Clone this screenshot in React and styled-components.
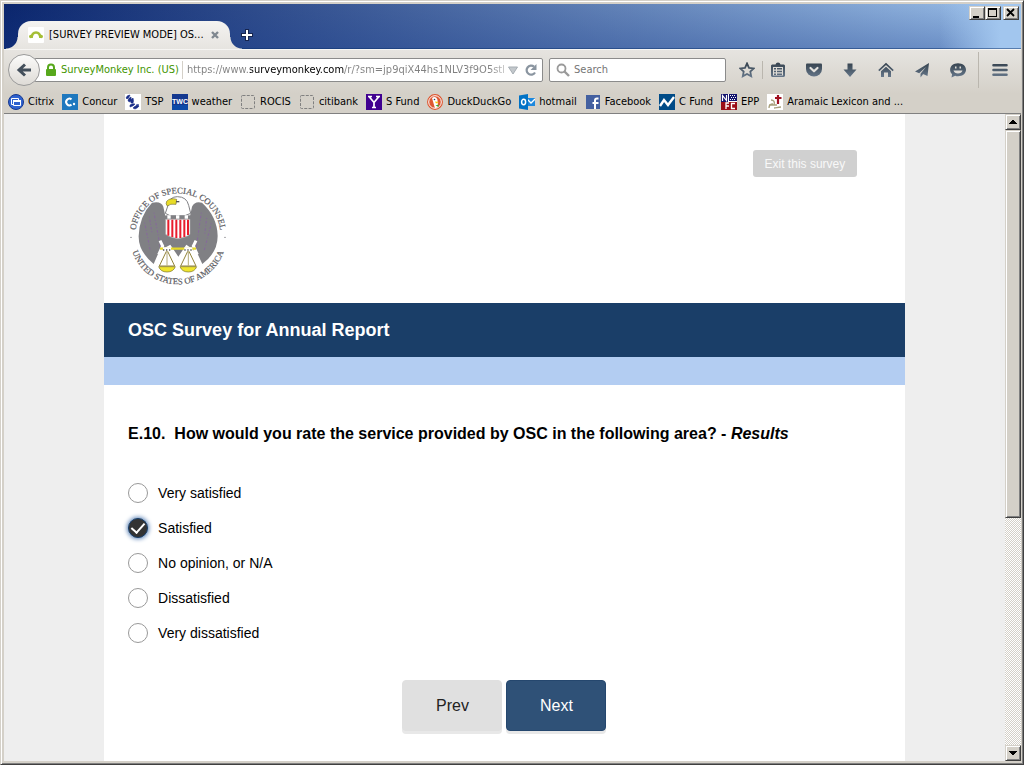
import React, { useState } from "react";
import styled, { createGlobalStyle, css } from "styled-components";

const GlobalStyle = createGlobalStyle`
  * {
    box-sizing: border-box;
  }
  body {
    margin: 0;
    overflow: hidden;
  }
  button, input {
    font: inherit;
    padding: 0;
    border: 0;
    background: none;
  }
`;

const face = "#d4d0c8";

const raised = css`
  background-color: ${face};
  border: 1px solid;
  border-color: #d4d0c8 #404040 #404040 #d4d0c8;
  box-shadow: inset 1px 1px #fff, inset -1px -1px #808080;
`;

/* ---------- window ---------- */

const Window = styled.div`
  ${raised}
  height: 100vh;
  padding: 3px 2px 3px 3px;
  display: flex;
  flex-direction: column;
  font-family: "DejaVu Sans Condensed", "DejaVu Sans", sans-serif;
  font-size: 11px;
  line-height: 14px;
  color: #000;
`;

const TitleBar = styled.div`
  height: 45px;
  flex: none;
  display: flex;
  align-items: flex-end;
  padding-left: 14px;
  background: linear-gradient(to right, transparent 92%, #a2c6ee 98%),
    linear-gradient(rgba(24, 60, 140, 0.08), rgba(24, 60, 140, 0.36)),
    linear-gradient(to right, #0a246a, #a6caf0);
  box-shadow: inset 0 -1px rgba(10, 50, 110, 0.5);
`;

const Tab = styled.div`
  position: relative;
  width: 212px;
  height: 28px;
  padding: 0 10px;
  display: flex;
  align-items: center;
  gap: 5px;
  border-radius: 13px 13px 0 0;
  background: linear-gradient(#f4f3f1, #e6e4e0);
  &::before,
  &::after {
    content: "";
    position: absolute;
    bottom: 0;
    width: 12px;
    height: 12px;
  }
  &::before {
    right: 100%;
    background: radial-gradient(circle at 0 0, transparent 11px, #e6e4e0 12px);
  }
  &::after {
    left: 100%;
    background: radial-gradient(circle at 100% 0, transparent 11px, #e6e4e0 12px);
  }
`;

const TabTitle = styled.span`
  flex: 1;
  white-space: nowrap;
`;

const PlainBtn = styled.button`
  display: flex;
  align-items: center;
  justify-content: center;
`;

const NewTabBtn = styled(PlainBtn)`
  width: 34px;
  height: 28px;
`;

const WindowBtns = styled.div`
  align-self: flex-start;
  margin-left: auto;
  padding: 2px 2px 0 0;
  display: flex;
`;

const WindowBtn = styled.button`
  ${raised}
  width: 16px;
  height: 14px;
  display: flex;
  &:last-child {
    margin-left: 2px;
  }
`;

/* ---------- toolbars ---------- */

const Toolbars = styled.div`
  flex: none;
  background: linear-gradient(#e6e4e0, ${face} 44px);
  border-top: 1px solid #f6f5f3;
  border-bottom: 1px solid #808080;
`;

const NavBar = styled.div`
  height: 40px;
  padding-left: 4px;
  display: flex;
  align-items: center;
`;

const BackBtn = styled(PlainBtn)`
  position: relative;
  z-index: 1;
  flex: none;
  width: 32px;
  height: 32px;
  margin-right: -6px;
  border: 1px solid #9a9a9a;
  border-radius: 50%;
  background: linear-gradient(#fbfbfa, #dedbd6);
`;

const Field = styled.div`
  height: 24px;
  display: flex;
  align-items: center;
  background: #fff;
  border: 1px solid #8b8b8b;
  border-radius: 2px;
`;

const UrlField = styled(Field)`
  flex: 1;
  min-width: 0;
  padding: 0 2px 0 10px;
  margin-right: 6px;
`;

const Identity = styled.span`
  padding: 0 3px 0 4px;
  margin-right: 4px;
  line-height: 18px;
  color: #429500;
  border-right: 1px solid #d4d0c8;
  white-space: nowrap;
`;

const UrlInput = styled.input`
  flex: 1;
  min-width: 0;
  color: transparent;
  outline: none;
  background: linear-gradient(
    to right,
    #808080 63px,
    #000 63px,
    #000 157px,
    #808080 157px,
    #808080 calc(100% - 16px),
    #c0c0c0
  );
  background-clip: text;
  -webkit-background-clip: text;
`;

const UrlBtn = styled(PlainBtn)`
  width: 18px;
  height: 22px;
`;

const SearchField = styled(Field)`
  flex: none;
  width: 177px;
  padding-left: 6px;
  margin-right: 6px;
  gap: 4px;
`;

const SearchInput = styled.input`
  flex: 1;
  min-width: 0;
  outline: none;
  &::placeholder {
    color: #757575;
    opacity: 1;
  }
`;

const ToolBtn = styled(PlainBtn)`
  flex: none;
  width: ${(props) => props.$w || 36}px;
  height: 32px;
`;

const Separator = styled.span`
  flex: none;
  width: 1px;
  height: ${(props) => props.$h}px;
  margin: ${(props) => props.$margin || 0};
  background: #bab6ae;
`;

const Bookmarks = styled.nav`
  height: 23px;
  padding-left: 4px;
  display: flex;
  align-items: center;
  gap: 8px;
`;

const Bookmark = styled.a`
  flex: none;
  display: flex;
  align-items: center;
  gap: 4px;
  color: #000;
  text-decoration: none;
  white-space: nowrap;
`;

/* ---------- page ---------- */

const Viewport = styled.div`
  flex: 1;
  min-height: 0;
  display: flex;
`;

const Page = styled.div`
  flex: 1;
  overflow: hidden;
  background: #eee;
  font-family: "Liberation Sans", Arial, sans-serif;
`;

const Survey = styled.main`
  width: 80%;
  min-height: 100%;
  margin: 0 auto;
  background: #fff;
`;

const SurveyHeader = styled.header`
  display: flex;
  justify-content: space-between;
  align-items: flex-start;
  padding: 36px 48px 17px 24px;
`;

const Logo = styled.svg`
  width: 100px;
  height: 100px;
  margin-top: 36px;
  overflow: visible;
`;

const ExitBtn = styled.button`
  width: 104px;
  height: 27px;
  border-radius: 3px;
  background: #d0d0d0;
  color: #f8f8f8;
  font-size: 12px;
`;

const SurveyTitle = styled.h1`
  margin: 0;
  padding: 0 24px;
  font-size: 18px;
  line-height: 54px;
  color: #fff;
  background: #1a3e68;
`;

const Strip = styled.div`
  height: 28px;
  background: #b3cdf2;
`;

const Question = styled.fieldset`
  margin: 0;
  padding: 0 24px;
  border: 0;
`;

const QuestionTitle = styled.legend`
  padding: 39px 0 31px;
  font-size: 16px;
  line-height: 20px;
  font-weight: bold;
`;

const Option = styled.label`
  height: 35px;
  display: flex;
  align-items: center;
  gap: 10px;
  font-size: 14px;
`;

const Radio = styled.input`
  appearance: none;
  flex: none;
  width: 20px;
  height: 20px;
  margin: 0;
  border: 1px solid #999;
  border-radius: 50%;
  background: #fff;
  display: flex;
  justify-content: center;
  &:checked {
    border-color: #1a3e68;
    background: #333;
    box-shadow: 0 0 4px 1px #5f86b8;
  }
  &:checked::after {
    content: "";
    width: 6px;
    height: 11px;
    margin-top: 2px;
    border: solid #fff;
    border-width: 0 2px 2px 0;
    transform: translateY(-1px) rotate(42deg);
  }
`;

const Actions = styled.div`
  display: flex;
  justify-content: center;
  gap: 4px;
  padding: 30px 0;
`;

const ActionBtn = styled.button`
  width: 100px;
  height: 51px;
  border-radius: 4px;
  font-size: 16px;
  color: ${(props) => (props.$primary ? "#fff" : "#222")};
  background: ${(props) => (props.$primary ? "#2f5177" : "#e0e0e0")};
  border: 1px solid ${(props) => (props.$primary ? "#25476e" : "#e0e0e0")};
  box-shadow: 0 3px #e8e8e8;
`;

/* ---------- scrollbar ---------- */

const Scrollbar = styled.div`
  flex: none;
  width: 16px;
  display: flex;
  flex-direction: column;
  background: repeating-conic-gradient(#fff 0 25%, ${face} 0 50%) 0 0 / 2px 2px;
`;

const ScrollBtn = styled.button`
  ${raised}
  flex: none;
  height: 16px;
  display: flex;
  align-items: center;
  justify-content: center;
`;

const Thumb = styled.div`
  ${raised}
  flex: 63;
`;

const Track = styled.div`
  flex: 37;
`;

/* ---------- drawings ---------- */

const Svg = styled.svg.attrs((props) => ({
  width: props.$w || 16,
  height: props.$h || props.$w || 16,
  viewBox: `0 0 ${props.$w || 16} ${props.$h || props.$w || 16}`,
  "aria-hidden": true,
}))`
  flex: none;
`;

const ink = "url(#ink)";

const icons = {
  star: (
    <g>
      <linearGradient id="ink" gradientUnits="userSpaceOnUse" x1="0" y1="1" x2="0" y2="15">
        <stop offset="0" stopColor="#36434f" />
        <stop offset="1" stopColor="#66778a" />
      </linearGradient>
      <path d="M8 1.500l2 4.300 4.800.6-3.500 3.200.9 4.700L8 12l-4.200 2.300.9-4.700L1.200 6.400 6 5.800z" fill="none" stroke={ink} strokeWidth="1.800" />
    </g>
  ),
  list: (
    <g>
      <path d="M2 2.500h3.500Q6 .5 8 .5t2.500 2H14l1 1V14l-1 1H2l-1-1V3.500z" fill={ink} />
      <path d="M3 5h10v8.500H3z" fill="#dedbd6" />
      <path d="M4 6h2v1.500H4zM7 6h5v1.500H7zM4 8.700h2v1.500H4zM7 8.700h5v1.500H7zM4 11.400h2v1.500H4zM7 11.400h5v1.500H7z" fill={ink} />
    </g>
  ),
  pocket: (
    <g>
      <path d="M1 1.500h14q1 0 1 1V7a8 7.500 0 0 1-16 0V2.500q0-1 1-1z" fill={ink} />
      <path d="M4.500 6l3.500 3.300L11.500 6" fill="none" stroke="#e4e2de" strokeWidth="2.200" strokeLinecap="round" strokeLinejoin="round" />
    </g>
  ),
  down: <path d="M5.500 1.500h5v6h4L8 15 1.500 7.500h4z" fill={ink} />,
  home: (
    <g>
      <path d="M.8 8.700L8 2l7.200 6.700" fill="none" stroke={ink} strokeWidth="1.700" />
      <path d="M3 9.300l5-4.600 5 4.600V15h-3v-4.500H6V15H3z" fill={ink} />
    </g>
  ),
  plane: (
    <path d="M15 1L1 9.500l4.200 1.700L12 5 6.500 11.800V15.500l2-2.500zM15 1L9 12l4.500 2z" fill={ink} />
  ),
  smile: (
    <g>
      <path d="M8 1.300c4.600 0 8 2.800 8 6.500s-3.400 6.500-8 6.500c-1 0-2-.1-2.800-.5L1.500 15.500l.6-3.300C.8 11 .1 9.600.1 7.800.1 4.100 3.400 1.300 8 1.300z" fill={ink} />
      <path d="M3.500 8.500h9c-.4 2-2.200 3-4.500 3s-4.100-1-4.500-3zM5 4.500h1.500v2H5zM9.500 4.500H11v2H9.500z" fill="#e0ddd8" />
    </g>
  ),
  menu: (
    <path d="M1.500 2h13a1.300 1.300 0 0 1 0 2.600h-13a1.300 1.300 0 0 1 0-2.600zM1.500 6.700h13a1.300 1.300 0 0 1 0 2.600h-13a1.300 1.300 0 0 1 0-2.600zM1.500 11.400h13a1.300 1.300 0 0 1 0 2.600h-13a1.300 1.300 0 0 1 0-2.600z" fill={ink} />
  ),
};

const dashed = (
  <rect x="1.500" y="1.500" width="13" height="13" rx="1" fill="none" stroke="#808080" strokeDasharray="3 1.300" />
);

const bookmarks = [
  {
    label: "Citrix",
    icon: (
      <g>
        <circle cx="8" cy="8" r="7.500" fill="#2f62cf" stroke="#17398f" />
        <path d="M3.500 4.500h7v6h-7z" fill="#2f62cf" stroke="#fff" />
        <path d="M5.500 6.500h7v5h-7z" fill="#2f62cf" stroke="#fff" />
        <path d="M5 6h8v2H5z" fill="#fff" />
      </g>
    ),
  },
  {
    label: "Concur",
    icon: (
      <g>
        <path d="M0 0h16v16H0z" fill="#1f78be" />
        <path d="M9.500 5.400a3.300 3.300 0 1 0 0 5.200" fill="none" stroke="#fff" strokeWidth="2" />
        <circle cx="12" cy="10" r="1.200" fill="#fff" />
      </g>
    ),
  },
  {
    label: "TSP",
    icon: (
      <g>
        <path d="M0 0h16v16H0z" fill="#fff" />
        <path d="M1 4q1-3 4-3-1 3-3 4zM3 7q0-3 3-4 1 3-1 5zM6 9q-1-3 2-5 1 3 0 5zM5 11q3-2 5-1-1 2-5 3zM8 14q2-3 6-2-1 2-4 3zM11 11q2-1 3 0l-2 1z" fill="#1b2f8a" stroke="#1b2f8a" strokeWidth=".6" />
      </g>
    ),
  },
  {
    label: "weather",
    icon: (
      <g>
        <path d="M0 0h16v16H0z" fill="#14388f" />
        <path d="M0 11h16v5H0z" fill="#0d4aa8" />
        <text x="8" y="10" textAnchor="middle" fontSize="7" fontWeight="bold" fontFamily="Liberation Sans" fill="#fff">TWC</text>
      </g>
    ),
  },
  { label: "ROCIS", icon: dashed },
  { label: "citibank", icon: dashed },
  {
    label: "S Fund",
    icon: (
      <g>
        <path d="M0 0h16v16H0z" fill="#400090" />
        <path d="M3 2.500l5 6 5-6M8 8v6M2 2.500h4M10 2.500h4M6 13.500h4" fill="none" stroke="#fff" strokeWidth="1.700" />
      </g>
    ),
  },
  {
    label: "DuckDuckGo",
    icon: (
      <g>
        <circle cx="8" cy="8" r="7.200" fill="#de5833" stroke="#de5833" strokeWidth="1.500" />
        <circle cx="8" cy="8" r="6.300" fill="none" stroke="#fff" />
        <path d="M5 4c2-2 5-1 5.500 2l.5 7-3 1.200z" fill="#fff" />
        <path d="M8 7.500l4 .5-3 1.500z" fill="#fc0" />
        <circle cx="7.500" cy="5.500" r=".8" fill="#246" />
        <path d="M8.500 11.500l3-1v2.500z" fill="#3a3" />
      </g>
    ),
  },
  {
    label: "hotmail",
    icon: (
      <g>
        <path d="M8 4h8v8H8z" fill="#1e88dd" />
        <path d="M8 5l4 4 4-4" fill="none" stroke="#fff" strokeWidth="1.300" />
        <path d="M0 1.500L9 0v16l-9-1.500z" fill="#0072c6" />
        <ellipse cx="4.600" cy="8" rx="2" ry="2.700" fill="none" stroke="#fff" strokeWidth="1.500" />
      </g>
    ),
  },
  {
    label: "Facebook",
    icon: (
      <g>
        <path d="M1 1h14v14H1z" fill="#4460a0" />
        <path d="M10 15V9H7.500M10 9h3.500M10 9V6.500q0-2 2-2h1.500" fill="none" stroke="#fff" strokeWidth="2" />
      </g>
    ),
  },
  {
    label: "C Fund",
    icon: (
      <g>
        <path d="M0 0h16v16H0z" fill="#004b87" />
        <path d="M1 12l4-6 4 5 6-8" fill="none" stroke="#fff" strokeWidth="2.400" />
      </g>
    ),
  },
  {
    label: "EPP",
    icon: (
      <g>
        <path d="M0 0h16v16H0z" fill="#fff" />
        <path d="M0 0h7v8H0zM8 0h8v7H8z" fill="#14146e" />
        <path d="M1.500 7V1.500l4 5V1" fill="none" stroke="#fff" strokeWidth="1.200" />
        <path d="M9 1h1v1H9zM11 1h1v1h-1zM13 1h1v1h-1zM10 3h1v1h-1zM12 3h1v1h-1zM14 3h1v1h-1zM9 5h1v1H9zM11 5h1v1h-1zM13 5h1v1h-1z" fill="#fff" />
        <path d="M0 8h7v8H0zM7 8h9v8H7z" fill="#9b0d17" />
        <path d="M5 15V9h3M5 12h3M14 9.500h-3.500v5H14" fill="none" stroke="#fff" strokeWidth="1.300" />
      </g>
    ),
  },
  {
    label: "Aramaic Lexicon and ...",
    icon: (
      <g>
        <path d="M0 0h16v16H0z" fill="#fff" />
        <path d="M11 1v9M8 4h6.500" stroke="#a01020" strokeWidth="2.200" />
        <path d="M2 14c0-3 2-4 4-4M4 6c3 0 4 2 3 5M7 14c2 0 4-1 7-1M2 11h8" fill="none" stroke="#a8a07c" strokeWidth="1.300" />
      </g>
    ),
  },
];

const Seal = () => (
  <Logo viewBox="0 0 300 300" role="img" aria-label="Office of Special Counsel seal">
    <defs>
      <path id="sealTop" d="M22 150a128 128 0 0 1 256 0" />
      <path id="sealBottom" d="M5 150a145 145 0 0 0 290 0" />
    </defs>
    <g fontFamily="Liberation Serif" fontSize="26" fill="#5c5c62" stroke="#5c5c62" strokeWidth=".6" textAnchor="middle">
      <text>
        <textPath href="#sealTop" startOffset="50%">OFFICE OF SPECIAL COUNSEL</textPath>
      </text>
      <text>
        <textPath href="#sealBottom" startOffset="50%">UNITED STATES OF AMERICA</textPath>
      </text>
    </g>
    <circle cx="9" cy="154" r="2" fill="#6b6b70" />
    <circle cx="291" cy="154" r="2" fill="#6b6b70" />
    <path
      d="M72 50q28-6 34 12l6 28h74l6-28q8-18 30-12 46 42 47 100 0 50-46 84l-14-30-20-18-14-10-24 36-24-36-18 10-20 20-12 28Q31 196 32 150 34 90 72 50z"
      fill="#808084"
    />
    <path d="M50 110l16 80M78 80l20 110M64 92l8 50M220 80l-16 110M250 112l-22 84M236 96l-6 50" stroke="#86689c" strokeWidth="3" strokeDasharray="3 6 8 5" fill="none" />
    <path d="M112 82l8-24q4-26 28-26 28 0 34 26l6 24-20 8H128z" fill="#fff" stroke="#808084" strokeWidth="3" />
    <path d="M146 40q-20-6-30 6-4 8 2 14 8-8 26-5z" fill="#e8dc28" stroke="#77702a" strokeWidth="2" />
    <path d="M144 47h10" stroke="#555" strokeWidth="4" />
    <path d="M112 88h76v14h-76z" fill="#808084" />
    <path d="M118 88h10v10h-10zM144 88h10v10h-10zM170 88h10v10h-10z" fill="#fff" />
    <path d="M113 100h73v45q-8 8-36 13-29-5-37-13z" fill="#fff" stroke="#aaa" strokeWidth="2" />
    <path d="M121 101v48M133 101v52M145 101v55M157 101v55M169 101v52M180 101v46" stroke="#e81c2c" strokeWidth="6" />
    <path d="M96 164l8 16-12 26M204 164l-8 16 12 26" stroke="#fff" strokeWidth="9" fill="none" />
    <path d="M96 188h108" stroke="#e5d829" strokeWidth="7" />
    <path d="M117 192L94 240h46zM181 192l-23 48h46z" fill="#fff" stroke="#92843a" strokeWidth="3" />
    <path d="M117 192v46M181 192v46" stroke="#92843a" strokeWidth="2" />
    <path d="M92 242h50q-6 16-25 16t-25-16zM156 242h50q-6 16-25 16t-25-16z" fill="#efe52e" stroke="#77702a" strokeWidth="2" />
    <path d="M105 190h24M169 190h24" stroke="#fff" strokeWidth="12" />
    <path d="M105 192h24M169 192h24" stroke="#555" strokeWidth="5" strokeDasharray="4 5" />
  </Logo>
);

const options = [
  "Very satisfied",
  "Satisfied",
  "No opinion, or N/A",
  "Dissatisfied",
  "Very dissatisfied",
];

const App = () => {
  const [answer, setAnswer] = useState("Satisfied");

  return (
    <Window>
      <GlobalStyle />
      <TitleBar>
        <Tab>
          <Svg>
            <rect width="16" height="16" rx="1" fill="#fff" />
            <path d="M3.500 11Q4 5.500 8 5.500t4.500 5.500" fill="none" stroke="#a5be35" strokeWidth="2.600" />
            <circle cx="2.800" cy="9.500" r="1.800" fill="#a5be35" />
            <circle cx="13.200" cy="9.500" r="1.800" fill="#a5be35" />
          </Svg>
          <TabTitle>[SURVEY PREVIEW MODE] OS...</TabTitle>
          <PlainBtn aria-label="Close tab">
            <Svg $w={12}>
              <path d="M3 3l6 6M9 3L3 9" stroke="#808890" strokeWidth="2.400" />
            </Svg>
          </PlainBtn>
        </Tab>
        <NewTabBtn aria-label="New tab">
          <Svg $w={14}>
            <path d="M7 1v12M1 7h12" stroke="#16254f" strokeWidth="4" />
            <path d="M7 2v10M2 7h10" stroke="#fff" strokeWidth="2" />
          </Svg>
        </NewTabBtn>
        <WindowBtns>
          <WindowBtn aria-label="Minimize">
            <Svg $w={14} $h={12}>
              <path d="M3 9h6v2H3z" />
            </Svg>
          </WindowBtn>
          <WindowBtn aria-label="Maximize">
            <Svg $w={14} $h={12}>
              <path d="M2 1h9v9H2zM3 3v6h7V3z" fillRule="evenodd" />
            </Svg>
          </WindowBtn>
          <WindowBtn aria-label="Close">
            <Svg $w={14} $h={12}>
              <path d="M3 2l7 7M10 2L3 9" stroke="#000" strokeWidth="1.800" />
            </Svg>
          </WindowBtn>
        </WindowBtns>
      </TitleBar>

      <Toolbars>
        <NavBar>
          <BackBtn aria-label="Back">
            <Svg>
              <path d="M9 2.500L3 8l6 5.500M3.500 8H15" fill="none" stroke="#434f5b" strokeWidth="3" />
            </Svg>
          </BackBtn>
          <UrlField>
            <Svg $w={12} $h={14}>
              <path d="M3 7V4.500a3 3 0 0 1 6 0V7" fill="none" stroke="#57a81c" strokeWidth="2" />
              <rect x="1" y="6" width="10" height="7" rx="1" fill="#57a81c" />
            </Svg>
            <Identity>SurveyMonkey Inc. (US)</Identity>
            <UrlInput
              aria-label="Address"
              spellCheck={false}
              defaultValue="https://www.surveymonkey.com/r/?sm=jp9qiX44hs1NLV3f9O5sth"
            />
            <UrlBtn aria-label="History">
              <Svg $w={12}>
                <path d="M1.500 3h9L6 10z" fill="#c3c8cc" stroke="#a6adb3" />
              </Svg>
            </UrlBtn>
            <UrlBtn aria-label="Reload">
              <Svg $w={14}>
                <path d="M11 9.500A4.500 4.500 0 1 1 10 3.700" fill="none" stroke="#8a95a0" strokeWidth="2.200" />
                <path d="M12.500 1v6h-6z" fill="#8a95a0" />
              </Svg>
            </UrlBtn>
          </UrlField>
          <SearchField>
            <Svg $w={14}>
              <circle cx="5.500" cy="5.500" r="4" fill="none" stroke="#9a9a9a" strokeWidth="1.800" />
              <path d="M8.500 8.500L13 13" stroke="#9a9a9a" strokeWidth="2.400" />
            </Svg>
            <SearchInput aria-label="Search" placeholder="Search" />
          </SearchField>
          <ToolBtn $w={30} aria-label="Bookmark this page"><Svg>{icons.star}</Svg></ToolBtn>
          <Separator $h={18} />
          <ToolBtn $w={30} aria-label="Show bookmarks"><Svg>{icons.list}</Svg></ToolBtn>
          <Separator $h={0} $margin="0 1px" />
          <ToolBtn aria-label="Pocket"><Svg>{icons.pocket}</Svg></ToolBtn>
          <ToolBtn aria-label="Downloads"><Svg>{icons.down}</Svg></ToolBtn>
          <ToolBtn aria-label="Home"><Svg>{icons.home}</Svg></ToolBtn>
          <ToolBtn aria-label="Share"><Svg>{icons.plane}</Svg></ToolBtn>
          <ToolBtn aria-label="Hello"><Svg>{icons.smile}</Svg></ToolBtn>
          <Separator $h={36} $margin="0 0 0 2px" />
          <ToolBtn $w={42} aria-label="Menu"><Svg>{icons.menu}</Svg></ToolBtn>
        </NavBar>
        <Bookmarks>
          {bookmarks.map((item) => (
            <Bookmark href="#" key={item.label}>
              <Svg>{item.icon}</Svg>
              {item.label}
            </Bookmark>
          ))}
        </Bookmarks>
      </Toolbars>

      <Viewport>
        <Page>
          <Survey>
            <SurveyHeader>
              <Seal />
              <ExitBtn>Exit this survey</ExitBtn>
            </SurveyHeader>
            <SurveyTitle>OSC Survey for Annual Report</SurveyTitle>
            <Strip />
            <Question>
              <QuestionTitle>
                E.10.&nbsp; How would you rate the service provided by OSC in the
                following area? - <em>Results</em>
              </QuestionTitle>
              {options.map((option) => (
                <Option key={option}>
                  <Radio
                    type="radio"
                    name="rating"
                    checked={answer === option}
                    onChange={() => setAnswer(option)}
                  />
                  {option}
                </Option>
              ))}
            </Question>
            <Actions>
              <ActionBtn>Prev</ActionBtn>
              <ActionBtn $primary>Next</ActionBtn>
            </Actions>
          </Survey>
        </Page>
        <Scrollbar>
          <ScrollBtn aria-label="Scroll up">
            <Svg $w={8} $h={4}>
              <path d="M3 0h2v1h1v1h1v1h1v1H0V3h1V2h1V1h1z" />
            </Svg>
          </ScrollBtn>
          <Thumb />
          <Track />
          <ScrollBtn aria-label="Scroll down">
            <Svg $w={8} $h={4}>
              <path d="M0 0h8v1H7v1H6v1H5v1H3V3H2V2H1V1H0z" />
            </Svg>
          </ScrollBtn>
        </Scrollbar>
      </Viewport>
    </Window>
  );
};

export default App;
